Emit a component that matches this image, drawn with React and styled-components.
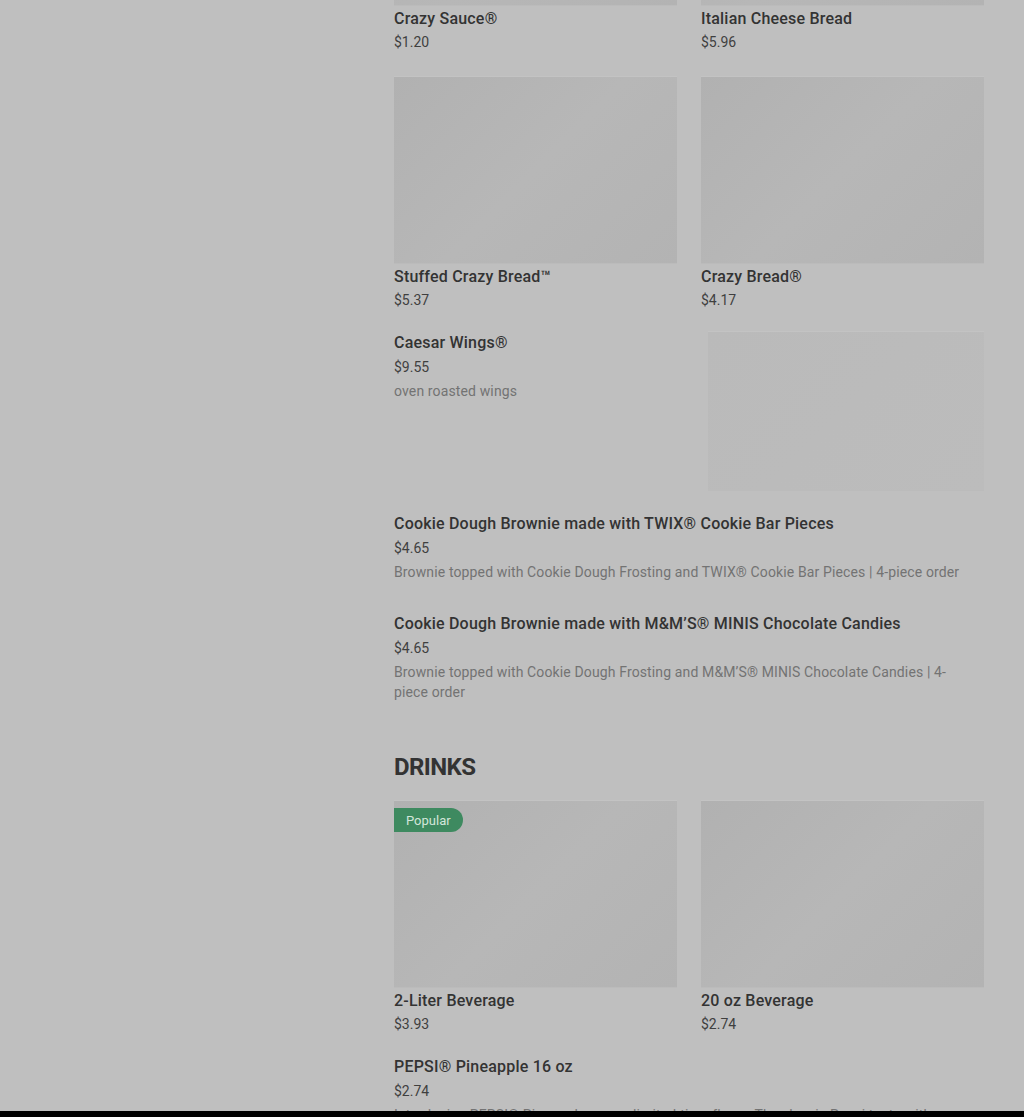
import React from "react";
import styled, { createGlobalStyle } from "styled-components";

const GlobalStyle = createGlobalStyle`
  html, body {
    margin: 0;
    padding: 0;
    background: #bfbfbf;
    font-family: Roboto, "Liberation Sans", Arial, sans-serif;
  }
  * {
    box-sizing: border-box;
  }
`;

const Viewport = styled.div`
  height: 1117px;
  overflow: hidden;
  background: #bfbfbf;
`;

// page is scrolled: the first row of photos starts above the fold
const Main = styled.main`
  width: 590px;
  margin: -182px 0 0 394px;
  display: flex;
  flex-direction: column;
`;

const Section = styled.section`
  display: flex;
  flex-direction: column;
  gap: 21px;
  margin-bottom: ${(p) => p.$after || 0}px;
`;

const Heading = styled.h2`
  margin: 0 0 17px;
  font-size: 24px;
  line-height: 32px;
  font-weight: 700;
  letter-spacing: -0.6px;
  color: #333;
`;

const Grid = styled.div`
  display: grid;
  grid-template-columns: 283px 283px;
  column-gap: 24px;
  row-gap: 24px;
`;

const Card = styled.div`
  display: flex;
  flex-direction: column;
`;

const Photo = styled.div`
  position: relative;
  height: ${(p) => p.$h || 188}px;
  width: ${(p) => (p.$w ? `${p.$w}px` : "100%")};
  flex-shrink: 0;
  background: ${(p) =>
    p.$faint
      ? "linear-gradient(135deg, #bababa, #bcbcbc)"
      : "linear-gradient(135deg, #b1b1b1 0%, #b7b7b7 50%, #b3b3b3 100%)"};
  box-shadow: inset 0 1px 0 #c3c3c3, inset 0 -1px 0 #bbbbbb;
`;

const Badge = styled.span`
  position: absolute;
  top: 8px;
  left: 0;
  height: 24px;
  padding: 0 12px;
  display: flex;
  align-items: center;
  background: #3e8a60;
  color: #d3e6da;
  font-size: 13px;
  border-radius: 0 12px 12px 0;
`;

const Title = styled.div`
  margin-top: ${(p) => (p.$tight ? 1 : 0)}px;
  font-size: 16px;
  line-height: 24px;
  font-weight: 500;
  letter-spacing: 0.2px;
  color: #333;
`;

const Price = styled.div`
  margin-top: ${(p) => (p.$tight ? 1 : 2)}px;
  font-size: 14px;
  line-height: 20px;
  color: #3f3f3f;
`;

const Desc = styled.div`
  margin-top: 4px;
  font-size: 14px;
  line-height: 20px;
  letter-spacing: 0.13px;
  color: #737373;
`;

const Row = styled.div`
  display: flex;
  justify-content: space-between;
  gap: 24px;
`;

const RowText = styled.div`
  flex: 1;
  padding-bottom: 9px;
  padding-right: 16px;
`;

const BottomBar = styled.div`
  position: fixed;
  left: 0;
  right: 0;
  bottom: 0;
  height: 6px;
  background: #000;
`;

const GridItem = ({ name, price, badge }) => (
  <Card>
    <Photo>{badge && <Badge>{badge}</Badge>}</Photo>
    <Title $tight>{name}</Title>
    <Price $tight>{price}</Price>
  </Card>
);

const ListItem = ({ name, price, desc, photo }) => (
  <Row>
    <RowText>
      <Title>{name}</Title>
      <Price>{price}</Price>
      {desc && <Desc>{desc}</Desc>}
    </RowText>
    {photo && <Photo $faint $w={276} $h={160} />}
  </Row>
);

const App = () => {
  return (
    <Viewport>
      <GlobalStyle />
      <Main>
        <Section $after={40}>
          <Grid>
            <GridItem name="Crazy Sauce®" price="$1.20" />
            <GridItem name="Italian Cheese Bread" price="$5.96" />
            <GridItem name="Stuffed Crazy Bread™" price="$5.37" />
            <GridItem name="Crazy Bread®" price="$4.17" />
          </Grid>
          <ListItem
            name="Caesar Wings®"
            price="$9.55"
            desc="oven roasted wings"
            photo
          />
          <ListItem
            name="Cookie Dough Brownie made with TWIX® Cookie Bar Pieces"
            price="$4.65"
            desc="Brownie topped with Cookie Dough Frosting and TWIX® Cookie Bar Pieces | 4-piece order"
          />
          <ListItem
            name="Cookie Dough Brownie made with M&M’S® MINIS Chocolate Candies"
            price="$4.65"
            desc="Brownie topped with Cookie Dough Frosting and M&M’S® MINIS Chocolate Candies | 4-piece order"
          />
        </Section>
        <Heading>DRINKS</Heading>
        <Section>
          <Grid>
            <GridItem name="2-Liter Beverage" price="$3.93" badge="Popular" />
            <GridItem name="20 oz Beverage" price="$2.74" />
          </Grid>
          <ListItem
            name="PEPSI® Pineapple 16 oz"
            price="$2.74"
            desc="Introducing PEPSI® Pineapple, a new limited-time flavor. The classic Pepsi taste with a splash of pineapple."
          />
        </Section>
      </Main>
      <BottomBar />
    </Viewport>
  );
};

export default App;
